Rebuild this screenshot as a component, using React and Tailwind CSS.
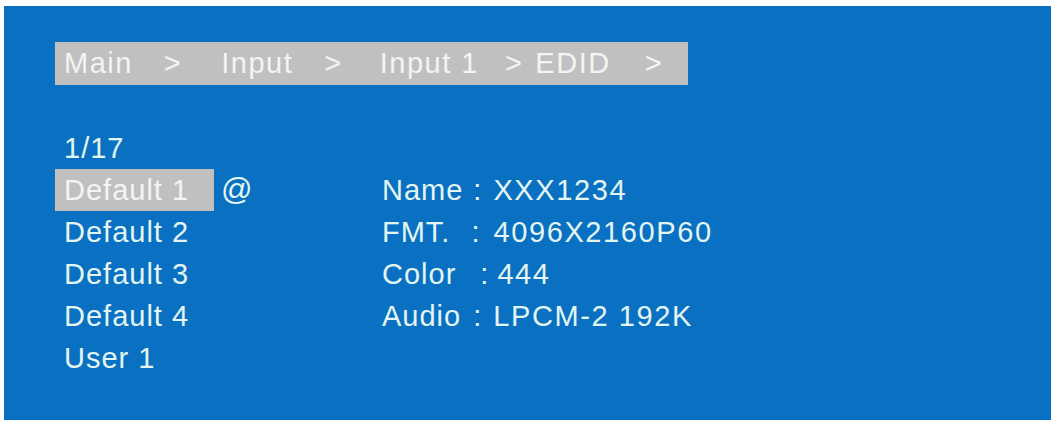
import React from "react";

const crumbs = [
  { text: "Main", ml: "ml-0" },
  { text: ">", ml: "ml-[31px]" },
  { text: "Input", ml: "ml-[39px]" },
  { text: ">", ml: "ml-[31px]" },
  { text: "Input 1", ml: "ml-[37px]" },
  { text: ">", ml: "ml-[26px]" },
  { text: "EDID", ml: "ml-[12px]" },
  { text: ">", ml: "ml-[34px]" },
];

const info = [
  { label: "Name", colon: "ml-[10px]", value: "XXX1234", vml: "ml-[11px]" },
  { label: "FMT.", colon: "ml-[21px]", value: "4096X2160P60", vml: "ml-[13px]" },
  { label: "Color", colon: "ml-[24px]", value: "444", vml: "ml-[8px]" },
  { label: "Audio", colon: "ml-[12px]", value: "LPCM-2 192K", vml: "ml-[11px]" },
];

const presets = ["Default 1", "Default 2", "Default 3", "Default 4", "User 1"];

const App = () => {
  return (
    <div className="w-[1058px] h-[425px] bg-white pt-[6px] pl-[4px] font-['Liberation_Sans',Arial,sans-serif]">
      <div className="w-[1047px] h-[414px] bg-[#0a70c2] pl-[51px] pt-[36px] text-[29px] tracking-[1px] text-[#e3f5f0]">
        {/* breadcrumb */}
        <div className="flex items-center w-[633px] h-[43px] leading-[43px] bg-[#c0c0c0] pl-[9px] tracking-[1.5px] text-[#f4f4f4]">
          {crumbs.map((c, i) => (
            <span key={i} className={c.ml}>
              {c.text}
            </span>
          ))}
        </div>

        <div className="mt-[42px] leading-[42px]">
          <div className="h-[42px] pl-[9px]">1/17</div>

          <div className="flex">
            <div className="w-[325px]">
              {presets.map((p, i) => (
                <div key={p} className="h-[42px] flex items-center">
                  {i === 0 ? (
                    <>
                      <span className="w-[159px] h-[42px] bg-[#c0c0c0] pl-[9px] text-[#f4f4f4]">
                        {p}
                      </span>
                      <span className="ml-[7px] text-[31px] tracking-normal">@</span>
                    </>
                  ) : (
                    <span className="pl-[9px]">{p}</span>
                  )}
                </div>
              ))}
            </div>

            <div className="pl-[2px]">
              {info.map((r) => (
                <div key={r.label} className="h-[42px] flex">
                  <span>{r.label}</span>
                  <span className={r.colon}>:</span>
                  <span className={`${r.vml} tracking-[1.6px]`}>{r.value}</span>
                </div>
              ))}
            </div>
          </div>
        </div>
      </div>
    </div>
  );
};

export default App;
